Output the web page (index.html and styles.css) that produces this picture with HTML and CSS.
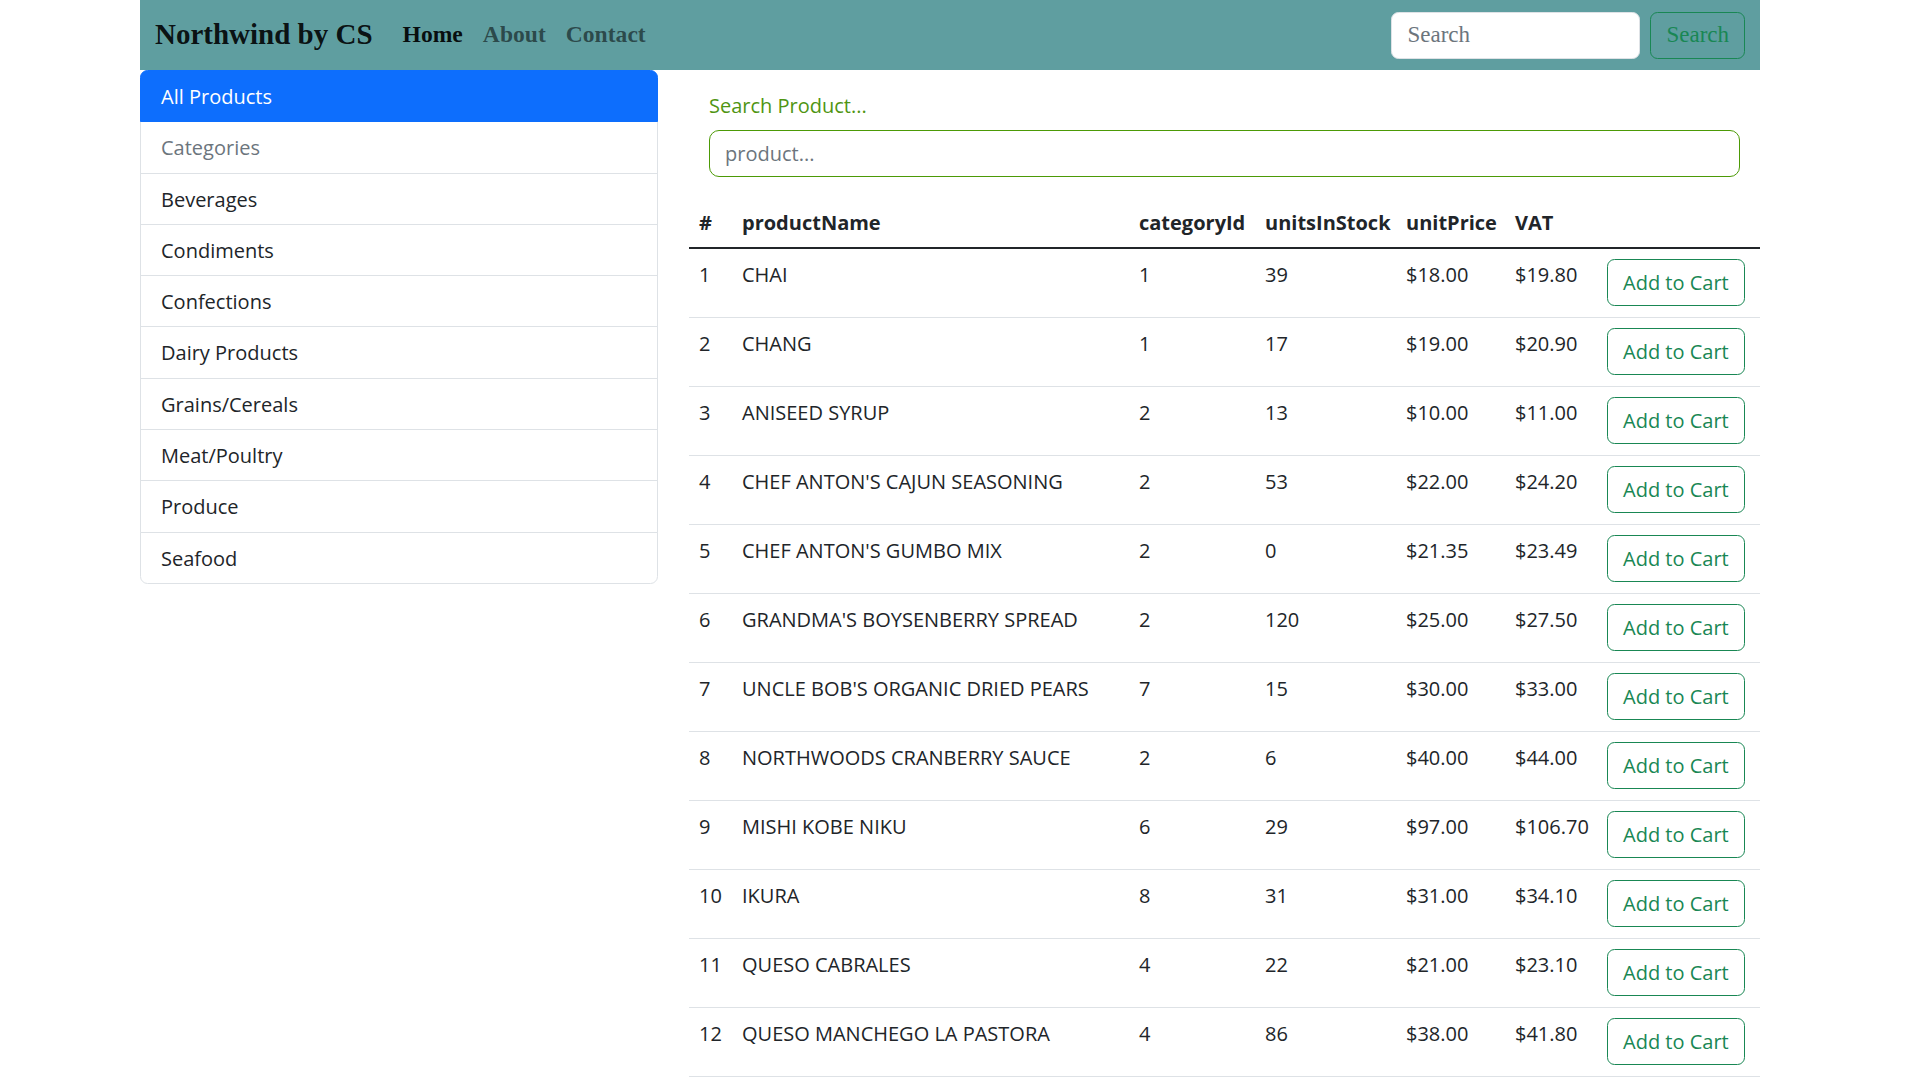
FILE: index.html
```html
<!DOCTYPE html>
<html lang="en">
<head>
<meta charset="utf-8">
<title>Northwind by CS</title>
<link rel="stylesheet" href="styles.css">
</head>
<body>
<div class="page">
  <nav class="navbar">
    <a class="brand" href="#">Northwind by CS</a>
    <ul class="nav-links">
      <li><a class="nav-link active" href="#">Home</a></li>
      <li><a class="nav-link" href="#">About</a></li>
      <li><a class="nav-link" href="#">Contact</a></li>
    </ul>
    <form class="nav-search">
      <input type="search" placeholder="Search">
      <button type="button">Search</button>
    </form>
  </nav>
  <div class="layout">
    <aside>
      <ul class="list-group">
        <li class="list-group-item active">All Products</li>
        <li class="list-group-item muted">Categories</li>
        <li class="list-group-item">Beverages</li>
        <li class="list-group-item">Condiments</li>
        <li class="list-group-item">Confections</li>
        <li class="list-group-item">Dairy Products</li>
        <li class="list-group-item">Grains/Cereals</li>
        <li class="list-group-item">Meat/Poultry</li>
        <li class="list-group-item">Produce</li>
        <li class="list-group-item">Seafood</li>
      </ul>
    </aside>
    <main>
      <form class="product-search">
        <label for="q">Search Product...</label>
        <input id="q" type="text" placeholder="product...">
      </form>
      <table class="products">
        <colgroup>
          <col class="c-id"><col class="c-name"><col class="c-cat"><col class="c-stock"><col class="c-price"><col class="c-vat"><col class="c-btn">
        </colgroup>
        <thead>
          <tr><th>#</th><th>productName</th><th>categoryId</th><th>unitsInStock</th><th>unitPrice</th><th>VAT</th><th></th></tr>
        </thead>
        <tbody>
<tr><td>1</td><td class="name">Chai</td><td>1</td><td>39</td><td>$18.00</td><td>$19.80</td><td><button class="btn-cart">Add to Cart</button></td></tr>
<tr><td>2</td><td class="name">Chang</td><td>1</td><td>17</td><td>$19.00</td><td>$20.90</td><td><button class="btn-cart">Add to Cart</button></td></tr>
<tr><td>3</td><td class="name">Aniseed Syrup</td><td>2</td><td>13</td><td>$10.00</td><td>$11.00</td><td><button class="btn-cart">Add to Cart</button></td></tr>
<tr><td>4</td><td class="name">Chef Anton's Cajun Seasoning</td><td>2</td><td>53</td><td>$22.00</td><td>$24.20</td><td><button class="btn-cart">Add to Cart</button></td></tr>
<tr><td>5</td><td class="name">Chef Anton's Gumbo Mix</td><td>2</td><td>0</td><td>$21.35</td><td>$23.49</td><td><button class="btn-cart">Add to Cart</button></td></tr>
<tr><td>6</td><td class="name">Grandma's Boysenberry Spread</td><td>2</td><td>120</td><td>$25.00</td><td>$27.50</td><td><button class="btn-cart">Add to Cart</button></td></tr>
<tr><td>7</td><td class="name">Uncle Bob's Organic Dried Pears</td><td>7</td><td>15</td><td>$30.00</td><td>$33.00</td><td><button class="btn-cart">Add to Cart</button></td></tr>
<tr><td>8</td><td class="name">Northwoods Cranberry Sauce</td><td>2</td><td>6</td><td>$40.00</td><td>$44.00</td><td><button class="btn-cart">Add to Cart</button></td></tr>
<tr><td>9</td><td class="name">Mishi Kobe Niku</td><td>6</td><td>29</td><td>$97.00</td><td>$106.70</td><td><button class="btn-cart">Add to Cart</button></td></tr>
<tr><td>10</td><td class="name">Ikura</td><td>8</td><td>31</td><td>$31.00</td><td>$34.10</td><td><button class="btn-cart">Add to Cart</button></td></tr>
<tr><td>11</td><td class="name">Queso Cabrales</td><td>4</td><td>22</td><td>$21.00</td><td>$23.10</td><td><button class="btn-cart">Add to Cart</button></td></tr>
<tr><td>12</td><td class="name">Queso Manchego La Pastora</td><td>4</td><td>86</td><td>$38.00</td><td>$41.80</td><td><button class="btn-cart">Add to Cart</button></td></tr>
<tr><td>13</td><td class="name">Konbu</td><td>8</td><td>24</td><td>$6.00</td><td>$6.60</td><td><button class="btn-cart">Add to Cart</button></td></tr>
<tr><td>14</td><td class="name">Tofu</td><td>7</td><td>35</td><td>$23.25</td><td>$25.58</td><td><button class="btn-cart">Add to Cart</button></td></tr>
<tr><td>15</td><td class="name">Genen Shouyu</td><td>2</td><td>39</td><td>$15.50</td><td>$17.05</td><td><button class="btn-cart">Add to Cart</button></td></tr>
<tr><td>16</td><td class="name">Pavlova</td><td>3</td><td>29</td><td>$17.45</td><td>$19.20</td><td><button class="btn-cart">Add to Cart</button></td></tr>
<tr><td>17</td><td class="name">Alice Mutton</td><td>6</td><td>0</td><td>$39.00</td><td>$42.90</td><td><button class="btn-cart">Add to Cart</button></td></tr>
<tr><td>18</td><td class="name">Carnarvon Tigers</td><td>8</td><td>42</td><td>$62.50</td><td>$68.75</td><td><button class="btn-cart">Add to Cart</button></td></tr>
<tr><td>19</td><td class="name">Teatime Chocolate Biscuits</td><td>3</td><td>25</td><td>$9.20</td><td>$10.12</td><td><button class="btn-cart">Add to Cart</button></td></tr>
<tr><td>20</td><td class="name">Sir Rodney's Marmalade</td><td>3</td><td>40</td><td>$81.00</td><td>$89.10</td><td><button class="btn-cart">Add to Cart</button></td></tr>
<tr><td>21</td><td class="name">Sir Rodney's Scones</td><td>3</td><td>3</td><td>$10.00</td><td>$11.00</td><td><button class="btn-cart">Add to Cart</button></td></tr>
<tr><td>22</td><td class="name">Gustaf's Knäckebröd</td><td>5</td><td>104</td><td>$21.00</td><td>$23.10</td><td><button class="btn-cart">Add to Cart</button></td></tr>
<tr><td>23</td><td class="name">Tunnbröd</td><td>5</td><td>61</td><td>$9.00</td><td>$9.90</td><td><button class="btn-cart">Add to Cart</button></td></tr>
<tr><td>24</td><td class="name">Guaraná Fantástica</td><td>1</td><td>20</td><td>$4.50</td><td>$4.95</td><td><button class="btn-cart">Add to Cart</button></td></tr>
<tr><td>25</td><td class="name">NuNuCa Nuß-Nougat-Creme</td><td>3</td><td>76</td><td>$14.00</td><td>$15.40</td><td><button class="btn-cart">Add to Cart</button></td></tr>
<tr><td>26</td><td class="name">Gumbär Gummibärchen</td><td>3</td><td>15</td><td>$31.23</td><td>$34.35</td><td><button class="btn-cart">Add to Cart</button></td></tr>
<tr><td>27</td><td class="name">Schoggi Schokolade</td><td>3</td><td>49</td><td>$43.90</td><td>$48.29</td><td><button class="btn-cart">Add to Cart</button></td></tr>
<tr><td>28</td><td class="name">Rössle Sauerkraut</td><td>7</td><td>26</td><td>$45.60</td><td>$50.16</td><td><button class="btn-cart">Add to Cart</button></td></tr>
<tr><td>29</td><td class="name">Thüringer Rostbratwurst</td><td>6</td><td>0</td><td>$123.79</td><td>$136.17</td><td><button class="btn-cart">Add to Cart</button></td></tr>
<tr><td>30</td><td class="name">Nord-Ost Matjeshering</td><td>8</td><td>10</td><td>$25.89</td><td>$28.48</td><td><button class="btn-cart">Add to Cart</button></td></tr>
<tr><td>31</td><td class="name">Gorgonzola Telino</td><td>4</td><td>0</td><td>$12.50</td><td>$13.75</td><td><button class="btn-cart">Add to Cart</button></td></tr>
<tr><td>32</td><td class="name">Mascarpone Fabioli</td><td>4</td><td>9</td><td>$32.00</td><td>$35.20</td><td><button class="btn-cart">Add to Cart</button></td></tr>
<tr><td>33</td><td class="name">Geitost</td><td>4</td><td>112</td><td>$2.50</td><td>$2.75</td><td><button class="btn-cart">Add to Cart</button></td></tr>
<tr><td>34</td><td class="name">Sasquatch Ale</td><td>1</td><td>111</td><td>$14.00</td><td>$15.40</td><td><button class="btn-cart">Add to Cart</button></td></tr>
<tr><td>35</td><td class="name">Steeleye Stout</td><td>1</td><td>20</td><td>$18.00</td><td>$19.80</td><td><button class="btn-cart">Add to Cart</button></td></tr>
<tr><td>36</td><td class="name">Inlagd Sill</td><td>8</td><td>112</td><td>$19.00</td><td>$20.90</td><td><button class="btn-cart">Add to Cart</button></td></tr>
<tr><td>37</td><td class="name">Gravad lax</td><td>8</td><td>11</td><td>$26.00</td><td>$28.60</td><td><button class="btn-cart">Add to Cart</button></td></tr>
<tr><td>38</td><td class="name">Côte de Blaye</td><td>1</td><td>17</td><td>$263.50</td><td>$289.85</td><td><button class="btn-cart">Add to Cart</button></td></tr>
<tr><td>39</td><td class="name">Chartreuse verte</td><td>1</td><td>69</td><td>$18.00</td><td>$19.80</td><td><button class="btn-cart">Add to Cart</button></td></tr>
<tr><td>40</td><td class="name">Boston Crab Meat</td><td>8</td><td>123</td><td>$18.40</td><td>$20.24</td><td><button class="btn-cart">Add to Cart</button></td></tr>
<tr><td>41</td><td class="name">Jack's New England Clam Chowder</td><td>8</td><td>85</td><td>$9.65</td><td>$10.62</td><td><button class="btn-cart">Add to Cart</button></td></tr>
<tr><td>42</td><td class="name">Singaporean Hokkien Fried Mee</td><td>5</td><td>26</td><td>$14.00</td><td>$15.40</td><td><button class="btn-cart">Add to Cart</button></td></tr>
<tr><td>43</td><td class="name">Ipoh Coffee</td><td>1</td><td>17</td><td>$46.00</td><td>$50.60</td><td><button class="btn-cart">Add to Cart</button></td></tr>
<tr><td>44</td><td class="name">Gula Malacca</td><td>2</td><td>27</td><td>$19.45</td><td>$21.40</td><td><button class="btn-cart">Add to Cart</button></td></tr>
<tr><td>45</td><td class="name">Rogede sild</td><td>8</td><td>5</td><td>$9.50</td><td>$10.45</td><td><button class="btn-cart">Add to Cart</button></td></tr>
<tr><td>46</td><td class="name">Spegesild</td><td>8</td><td>95</td><td>$12.00</td><td>$13.20</td><td><button class="btn-cart">Add to Cart</button></td></tr>
<tr><td>47</td><td class="name">Zaanse koeken</td><td>3</td><td>36</td><td>$9.50</td><td>$10.45</td><td><button class="btn-cart">Add to Cart</button></td></tr>
<tr><td>48</td><td class="name">Chocolade</td><td>3</td><td>15</td><td>$12.75</td><td>$14.03</td><td><button class="btn-cart">Add to Cart</button></td></tr>
<tr><td>49</td><td class="name">Maxilaku</td><td>3</td><td>10</td><td>$20.00</td><td>$22.00</td><td><button class="btn-cart">Add to Cart</button></td></tr>
<tr><td>50</td><td class="name">Valkoinen suklaa</td><td>3</td><td>65</td><td>$16.25</td><td>$17.88</td><td><button class="btn-cart">Add to Cart</button></td></tr>
<tr><td>51</td><td class="name">Manjimup Dried Apples</td><td>7</td><td>20</td><td>$53.00</td><td>$58.30</td><td><button class="btn-cart">Add to Cart</button></td></tr>
<tr><td>52</td><td class="name">Filo Mix</td><td>5</td><td>38</td><td>$7.00</td><td>$7.70</td><td><button class="btn-cart">Add to Cart</button></td></tr>
<tr><td>53</td><td class="name">Perth Pasties</td><td>6</td><td>0</td><td>$32.80</td><td>$36.08</td><td><button class="btn-cart">Add to Cart</button></td></tr>
<tr><td>54</td><td class="name">Tourtière</td><td>6</td><td>21</td><td>$7.45</td><td>$8.20</td><td><button class="btn-cart">Add to Cart</button></td></tr>
<tr><td>55</td><td class="name">Pâté chinois</td><td>6</td><td>115</td><td>$24.00</td><td>$26.40</td><td><button class="btn-cart">Add to Cart</button></td></tr>
<tr><td>56</td><td class="name">Gnocchi di nonna Alice</td><td>5</td><td>21</td><td>$38.00</td><td>$41.80</td><td><button class="btn-cart">Add to Cart</button></td></tr>
<tr><td>57</td><td class="name">Ravioli Angelo</td><td>5</td><td>36</td><td>$19.50</td><td>$21.45</td><td><button class="btn-cart">Add to Cart</button></td></tr>
<tr><td>58</td><td class="name">Escargots de Bourgogne</td><td>8</td><td>62</td><td>$13.25</td><td>$14.58</td><td><button class="btn-cart">Add to Cart</button></td></tr>
<tr><td>59</td><td class="name">Raclette Courdavault</td><td>4</td><td>79</td><td>$55.00</td><td>$60.50</td><td><button class="btn-cart">Add to Cart</button></td></tr>
<tr><td>60</td><td class="name">Camembert Pierrot</td><td>4</td><td>19</td><td>$34.00</td><td>$37.40</td><td><button class="btn-cart">Add to Cart</button></td></tr>
<tr><td>61</td><td class="name">Sirop d'érable</td><td>2</td><td>113</td><td>$28.50</td><td>$31.35</td><td><button class="btn-cart">Add to Cart</button></td></tr>
<tr><td>62</td><td class="name">Tarte au sucre</td><td>3</td><td>17</td><td>$49.30</td><td>$54.23</td><td><button class="btn-cart">Add to Cart</button></td></tr>
<tr><td>63</td><td class="name">Vegie-spread</td><td>2</td><td>24</td><td>$43.90</td><td>$48.29</td><td><button class="btn-cart">Add to Cart</button></td></tr>
<tr><td>64</td><td class="name">Wimmers gute Semmelknödel</td><td>5</td><td>22</td><td>$33.25</td><td>$36.58</td><td><button class="btn-cart">Add to Cart</button></td></tr>
<tr><td>65</td><td class="name">Louisiana Fiery Hot Pepper Sauce</td><td>2</td><td>76</td><td>$21.05</td><td>$23.16</td><td><button class="btn-cart">Add to Cart</button></td></tr>
<tr><td>66</td><td class="name">Louisiana Hot Spiced Okra</td><td>2</td><td>4</td><td>$17.00</td><td>$18.70</td><td><button class="btn-cart">Add to Cart</button></td></tr>
<tr><td>67</td><td class="name">Laughing Lumberjack Lager</td><td>1</td><td>52</td><td>$14.00</td><td>$15.40</td><td><button class="btn-cart">Add to Cart</button></td></tr>
<tr><td>68</td><td class="name">Scottish Longbreads</td><td>3</td><td>6</td><td>$12.50</td><td>$13.75</td><td><button class="btn-cart">Add to Cart</button></td></tr>
<tr><td>69</td><td class="name">Gudbrandsdalsost</td><td>4</td><td>26</td><td>$36.00</td><td>$39.60</td><td><button class="btn-cart">Add to Cart</button></td></tr>
<tr><td>70</td><td class="name">Outback Lager</td><td>1</td><td>15</td><td>$15.00</td><td>$16.50</td><td><button class="btn-cart">Add to Cart</button></td></tr>
<tr><td>71</td><td class="name">Flotemysost</td><td>4</td><td>26</td><td>$21.50</td><td>$23.65</td><td><button class="btn-cart">Add to Cart</button></td></tr>
<tr><td>72</td><td class="name">Mozzarella di Giovanni</td><td>4</td><td>14</td><td>$34.80</td><td>$38.28</td><td><button class="btn-cart">Add to Cart</button></td></tr>
<tr><td>73</td><td class="name">Röd Kaviar</td><td>8</td><td>101</td><td>$15.00</td><td>$16.50</td><td><button class="btn-cart">Add to Cart</button></td></tr>
<tr><td>74</td><td class="name">Longlife Tofu</td><td>7</td><td>4</td><td>$10.00</td><td>$11.00</td><td><button class="btn-cart">Add to Cart</button></td></tr>
<tr><td>75</td><td class="name">Rhönbräu Klosterbier</td><td>1</td><td>125</td><td>$7.75</td><td>$8.53</td><td><button class="btn-cart">Add to Cart</button></td></tr>
<tr><td>76</td><td class="name">Lakkalikööri</td><td>1</td><td>57</td><td>$18.00</td><td>$19.80</td><td><button class="btn-cart">Add to Cart</button></td></tr>
<tr><td>77</td><td class="name">Original Frankfurter grüne Soße</td><td>2</td><td>32</td><td>$13.00</td><td>$14.30</td><td><button class="btn-cart">Add to Cart</button></td></tr>
        </tbody>
      </table>
    </main>
  </div>
</div>
</body>
</html>
```
FILE: styles.css
```css
html, body {
  margin: 0;
  padding: 0;
}

body {
  font-family: "Open Sans", "Noto Sans", sans-serif;
  font-size: 20px;
  line-height: 1.5;
  color: #212529;
  background: #fff;
}

*, *::before, *::after {
  box-sizing: border-box;
}

::-webkit-scrollbar {
  width: 20px;
}
::-webkit-scrollbar-track {
  background: #f1f1f1;
}
::-webkit-scrollbar-thumb {
  background: #c1c1c1;
  border-left: 1px solid #f1f1f1;
  border-right: 1px solid #f1f1f1;
}
::-webkit-scrollbar-button:single-button {
  display: block;
  height: 20px;
  background-color: #f1f1f1;
  background-repeat: no-repeat;
  background-size: 4px 4px;
}
::-webkit-scrollbar-button:single-button:vertical:decrement {
  background-image:
    linear-gradient(to top left, #a3a3a3 50%, transparent 50%),
    linear-gradient(to top right, #a3a3a3 50%, transparent 50%);
  background-position: 6px 8px, 10px 8px;
}
::-webkit-scrollbar-button:single-button:vertical:increment {
  background-image:
    linear-gradient(to bottom left, #505050 50%, transparent 50%),
    linear-gradient(to bottom right, #505050 50%, transparent 50%);
  background-position: 6px 8px, 10px 8px;
}

.page {
  width: 1620px;
  margin-left: 140px;
}

/* ---------- navbar ---------- */
.navbar {
  display: flex;
  align-items: center;
  height: 70px;
  padding: 0 15px;
  background: #5f9ea0;
  font-family: "Liberation Serif", "Times New Roman", serif;
}

.brand {
  font-size: 29px;
  font-weight: 700;
  color: rgba(0, 0, 0, 0.9);
  text-decoration: none;
  margin-right: 20px;
  line-height: 1.5;
}

.nav-links {
  display: flex;
  list-style: none;
  margin: 0;
  padding: 0;
}

.nav-link {
  display: block;
  padding: 10px;
  font-size: 23.6px;
  font-weight: 700;
  color: rgba(0, 0, 0, 0.55);
  text-decoration: none;
}

.nav-link.active {
  color: rgba(0, 0, 0, 0.92);
}

.nav-search {
  margin-left: auto;
  display: flex;
  gap: 10px;
}

.nav-search input {
  width: 249px;
  height: 47px;
  padding: 7.5px 15px;
  border: 1px solid #dee2e6;
  border-radius: 7.5px;
  background: #fff;
  font-family: "Liberation Serif", serif;
  font-size: 23px;
  color: #212529;
}

.nav-search input::placeholder {
  color: #6c757d;
}

.nav-search button {
  height: 47px;
  padding: 0 15px;
  border: 1px solid #198754;
  border-radius: 7.5px;
  background: transparent;
  color: #198754;
  font-family: "Liberation Serif", serif;
  font-size: 23px;
}

/* ---------- layout ---------- */
.layout {
  display: grid;
  grid-template-columns: 518px 1fr;
  column-gap: 31px;
  align-items: start;
}

/* ---------- sidebar ---------- */
.list-group {
  list-style: none;
  margin: 0;
  padding: 0;
}

.list-group-item {
  position: relative;
  padding: 11px 20px 9.3px;
  line-height: 30px;
  border: 1px solid #dee2e6;
  margin-top: -1px;
  background: #fff;
  color: #212529;
}

.list-group-item:first-child {
  margin-top: 0;
  border-top-left-radius: 7.5px;
  border-top-right-radius: 7.5px;
}

.list-group-item:last-child {
  border-bottom-left-radius: 7.5px;
  border-bottom-right-radius: 7.5px;
}

.list-group-item.active {
  z-index: 1;
  background: #0d6efd;
  border-color: #0d6efd;
  color: #fff;
}

.list-group-item.muted {
  color: #6c757d;
}

/* ---------- main ---------- */
.product-search {
  margin: 20px;
}

.product-search label {
  display: block;
  padding-top: 1px;
  margin-bottom: 9px;
  color: #4f9512;
  line-height: 30px;
}

.product-search input {
  display: block;
  width: 100%;
  height: 47px;
  padding: 7.5px 15px;
  border: 1px solid #4c9a06;
  border-radius: 10px;
  font-family: "Open Sans", sans-serif;
  font-size: 20px;
  line-height: 30px;
  color: #212529;
}

.product-search input::placeholder {
  color: #6c757d;
}

.products {
  width: 100%;
  border-collapse: collapse;
  table-layout: fixed;
}

.c-id { width: 43px; }
.c-name { width: 397px; }
.c-cat { width: 126px; }
.c-stock { width: 141px; }
.c-price { width: 109px; }
.c-vat { width: 92px; }
.c-btn { width: 163px; }

.products th,
.products td {
  text-align: left;
  vertical-align: top;
  line-height: 30px;
  white-space: nowrap;
}

.products th {
  padding: 11px 10px 9px;
  font-weight: 700;
  border-bottom: 2px solid #212529;
}

.products td {
  padding: 11px 10px 11px;
  border-bottom: 1px solid #dee2e6;
}

.products td.name {
  text-transform: uppercase;
  overflow: hidden;
}

.btn-cart {
  display: inline-block;
  margin-top: -1px;
  padding: 7.5px 15px;
  border: 1px solid #198754;
  border-radius: 7.5px;
  background: #fff;
  color: #198754;
  font-family: "Open Sans", sans-serif;
  font-size: 20px;
  line-height: 30px;
}
```
